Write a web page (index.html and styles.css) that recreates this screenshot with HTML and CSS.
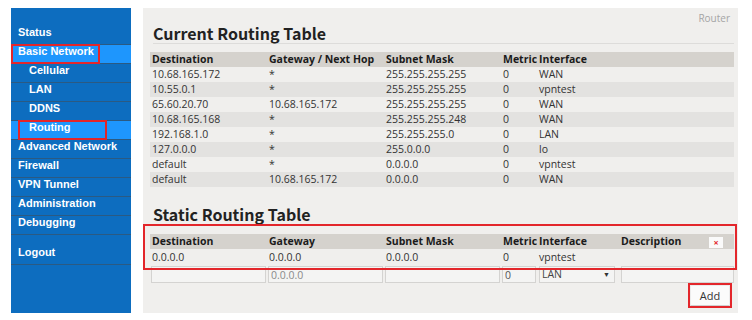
FILE: index.html
```html
<!DOCTYPE html>
<html lang="en">
<head>
<meta charset="utf-8">
<title>Routing</title>
<link rel="stylesheet" href="styles.css">
</head>
<body>
<div class="page">
  <nav class="side">
    <ul class="menu">
      <li class="item">Status</li>
      <li class="item active"><span class="mark mark-top"></span>Basic Network</li>
      <li class="item sub">Cellular</li>
      <li class="item sub">LAN</li>
      <li class="item sub">DDNS</li>
      <li class="item sub active"><span class="mark mark-sub"></span>Routing</li>
      <li class="item">Advanced Network</li>
      <li class="item">Firewall</li>
      <li class="item">VPN Tunnel</li>
      <li class="item">Administration</li>
      <li class="item">Debugging</li>
      <li class="item logout">Logout</li>
    </ul>
  </nav>
  <main class="panel">
    <div class="crumb">Router</div>
    <h2 class="title">Current Routing Table</h2>
    <table class="grid">
      <colgroup><col class="c-wide"><col class="c-wide"><col class="c-wide"><col class="c-metric"><col></colgroup>
      <thead>
        <tr><th>Destination</th><th>Gateway / Next Hop</th><th>Subnet Mask</th><th>Metric</th><th>Interface</th></tr>
      </thead>
      <tbody>
        <tr><td>10.68.165.172</td><td>*</td><td>255.255.255.255</td><td>0</td><td>WAN</td></tr>
        <tr><td>10.55.0.1</td><td>*</td><td>255.255.255.255</td><td>0</td><td>vpntest</td></tr>
        <tr><td>65.60.20.70</td><td>10.68.165.172</td><td>255.255.255.255</td><td>0</td><td>WAN</td></tr>
        <tr><td>10.68.165.168</td><td>*</td><td>255.255.255.248</td><td>0</td><td>WAN</td></tr>
        <tr><td>192.168.1.0</td><td>*</td><td>255.255.255.0</td><td>0</td><td>LAN</td></tr>
        <tr><td>127.0.0.0</td><td>*</td><td>255.0.0.0</td><td>0</td><td>lo</td></tr>
        <tr><td>default</td><td>*</td><td>0.0.0.0</td><td>0</td><td>vpntest</td></tr>
        <tr><td>default</td><td>10.68.165.172</td><td>0.0.0.0</td><td>0</td><td>WAN</td></tr>
      </tbody>
    </table>

    <h2 class="title static-title">Static Routing Table</h2>
    <div class="static">
      <span class="mark mark-table"></span>
      <table class="grid static-grid">
        <colgroup><col class="c-wide"><col class="c-wide"><col class="c-wide"><col class="c-metric"><col class="c-iface"><col></colgroup>
        <thead>
          <tr><th>Destination</th><th>Gateway</th><th>Subnet Mask</th><th>Metric</th><th>Interface</th><th><span class="del">×</span>Description</th></tr>
        </thead>
        <tbody>
          <tr class="data"><td>0.0.0.0</td><td>0.0.0.0</td><td>0.0.0.0</td><td>0</td><td>vpntest</td><td></td></tr>
          <tr class="edit">
            <td><input class="field" type="text"></td>
            <td><input class="field" type="text" placeholder="0.0.0.0"></td>
            <td><input class="field" type="text"></td>
            <td><input class="field" type="text" value="0"></td>
            <td class="iface-cell"><div class="select"><span>LAN</span><span class="arrow">▼</span></div></td>
            <td class="desc-cell"><input class="field" type="text"></td>
          </tr>
        </tbody>
      </table>
      <div class="actions">
        <span class="btn-mark"><button class="btn" type="button">Add</button></span>
      </div>
    </div>
  </main>
</div>
</body>
</html>
```
FILE: styles.css
```css
html, body {
  margin: 0;
  padding: 0;
  background: #ffffff;
}

body {
  font-family: "Open Sans", sans-serif;
}

.page {
  display: flex;
  gap: 12px;
  padding: 8px 0 0 11px;
}

/* sidebar */
.side {
  width: 120px;
  height: 305px;
  box-sizing: border-box;
  background: #0d6dbf;
  padding-top: 18px;
}

.menu {
  list-style: none;
  margin: 0;
  padding: 0;
}

.item {
  position: relative;
  height: 18px;
  line-height: 18px;
  padding-left: 7px;
  border-bottom: 1px solid #2b5a82;
  color: #ffffff;
  font: bold 11px "Liberation Sans", Arial, sans-serif;
  white-space: nowrap;
}

.item.sub {
  padding-left: 18px;
}

.item.active {
  background: #1e96fd;
}

.item.logout {
  margin-top: 11px;
}

.mark {
  position: absolute;
  box-sizing: border-box;
  border: 2px solid #e3262b;
  pointer-events: none;
}

.mark-top {
  left: 0;
  top: -1px;
  width: 89px;
  height: 20px;
}

.mark-sub {
  left: 7px;
  top: -1px;
  width: 89px;
  height: 20px;
}

/* content panel */
.panel {
  width: 595px;
  height: 305px;
  box-sizing: border-box;
  background: #f0efed;
  padding: 4px 4px 0 7px;
}

.crumb {
  text-align: right;
  font-size: 10px;
  line-height: 12px;
  color: #a5a5a5;
  padding-right: 4px;
}

.title {
  margin: 0 0 0 3px;
  font-family: "Noto Sans CJK SC", "Open Sans", sans-serif;
  font-size: 16px;
  font-weight: bold;
  line-height: 18px;
  padding-bottom: 1px;
  border-bottom: 1px solid #dddcda;
  color: #222222;
}

.static-title {
  margin-top: 18px;
}

.grid {
  width: 584px;
  border-collapse: collapse;
  table-layout: fixed;
  margin-top: 8px;
  font-size: 10.5px;
  color: #333333;
}

.c-wide {
  width: 117px;
}

.c-metric {
  width: 36px;
}

.c-iface {
  width: 82px;
}

.grid th,
.grid td {
  height: 15px;
  padding: 0 0 0 2px;
  line-height: 15px;
  text-align: left;
  white-space: nowrap;
  overflow: hidden;
}

.grid th {
  background: #d5d2cd;
  font-weight: bold;
  color: #1b1b1b;
}

.grid tbody tr:nth-child(even) td {
  background: #e3e2e0;
}

/* static table */
.static {
  position: relative;
  padding-top: 9px;
}

.static-grid {
  margin-top: 0;
}

.mark-table {
  left: -7px;
  top: -1px;
  width: 594px;
  height: 46px;
}

.static-grid tbody tr.data td {
  height: 16px;
  background: transparent;
}

.static-grid tbody tr.edit td {
  background: transparent;
  height: 17px;
  padding: 1px 1px 0 1px;
}

.static-grid tbody tr.edit td.iface-cell {
  padding: 1px 4px 0 2px;
}

.static-grid tbody tr.edit td.desc-cell {
  padding: 1px 0 0 2px;
}

.field {
  display: block;
  width: 100%;
  height: 17px;
  box-sizing: border-box;
  margin: 0;
  border: 1px solid #d4d3d1;
  background: #f4f4f3;
  padding: 0 2px;
  font: 10.5px "Open Sans", sans-serif;
  color: #555555;
}

.field::placeholder {
  color: #8a8a8a;
}

.select {
  display: flex;
  justify-content: space-between;
  align-items: center;
  height: 17px;
  box-sizing: border-box;
  border: 1px solid #d4d3d1;
  background: #f4f4f3;
  padding: 0 4px 0 2px;
  font-size: 10.5px;
  line-height: 15px;
  color: #444444;
}

.arrow {
  font-size: 7px;
  color: #333333;
}

.del {
  float: right;
  width: 14px;
  height: 11px;
  margin: 3px 11px 0 0;
  background: #fafafa;
  color: #e3262b;
  font-size: 9px;
  line-height: 11px;
  text-align: center;
  font-weight: bold;
}

.actions {
  display: flex;
  justify-content: flex-end;
  padding-right: 2px;
}

.btn-mark {
  display: inline-flex;
  border: 2px solid #e3262b;
}

.btn {
  width: 40px;
  height: 21px;
  margin: 0;
  padding: 0;
  border: 1px solid #ececec;
  border-bottom-color: #d0d0d0;
  background: #fbfbfb;
  font: 11px "Open Sans", sans-serif;
  color: #333333;
}
```
